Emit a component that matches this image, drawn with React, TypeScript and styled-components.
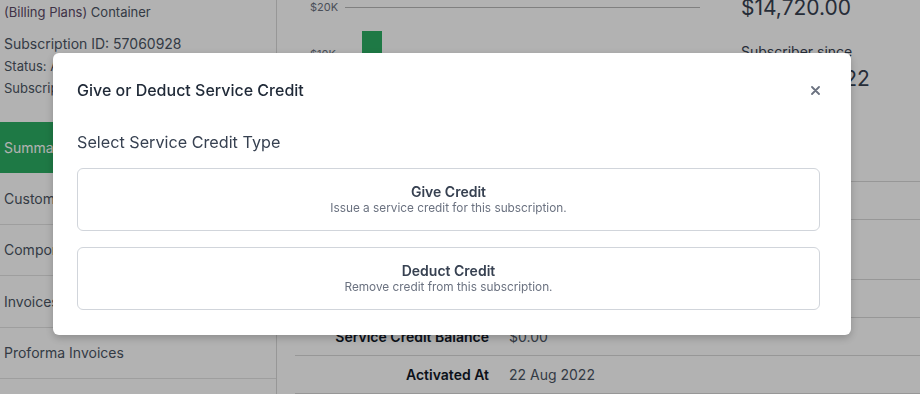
import React from "react";
import styled, { createGlobalStyle } from "styled-components";

const GlobalStyle = createGlobalStyle`
  html, body { margin: 0; padding: 0; background: #ffffff; overflow: hidden; }
  body { font-family: Inter, "Noto Sans", sans-serif; }
  * { box-sizing: border-box; }
`;

const Page = styled.div`
  display: flex;
  width: 920px;
  height: 394px;
  overflow: hidden;
  background: #ffffff;
  color: #374151;
`;

const Sidebar = styled.aside`
  width: 277px;
  flex-shrink: 0;
  border-right: 1px solid #d9d9d9;
  display: flex;
  flex-direction: column;
`;

const SideHeader = styled.div`
  display: flex;
  flex-direction: column;
  padding: 2px 4px 23px;
`;

const ContainerName = styled.div`
  font-size: 13px;
  line-height: 20px;
  color: #4b5563;
  margin-bottom: 11px;
  span { color: #5b4a66; }
`;

const SubId = styled.div`
  font-size: 14px;
  line-height: 22px;
  color: #4b5563;
`;

const Meta = styled.div`
  font-size: 13px;
  line-height: 22px;
  color: #4b5563;
`;

const NavItem = styled.div<{ $active?: boolean }>`
  height: 51.4px;
  flex-shrink: 0;
  display: flex;
  align-items: center;
  padding-left: 4px;
  font-size: 14px;
  color: ${(p) => (p.$active ? "#ffffff" : "#4b5563")};
  background: ${(p) => (p.$active ? "#2cae63" : "transparent")};
  border-bottom: 1px solid ${(p) => (p.$active ? "#2cae63" : "#e2e2e2")};
`;

const Main = styled.main`
  flex: 1;
  display: flex;
  flex-direction: column;
  padding-left: 18px;
  min-width: 0;
`;

const TopRow = styled.div`
  display: flex;
  height: 181px;
`;

const ChartSvg = styled.svg`
  width: 426px;
  height: 181px;
  flex-shrink: 0;
  display: block;
`;

const Stats = styled.div`
  display: flex;
  flex-direction: column;
  margin-left: 20px;
  margin-top: -5px;
`;

const BigValue = styled.div`
  font-size: 21px;
  line-height: 26px;
  color: #374151;
  white-space: nowrap;
`;

const StatLabel = styled.div`
  font-size: 14px;
  line-height: 20px;
  color: #374151;
  margin-top: 21px;
  margin-bottom: 4px;
`;

const Table = styled.div`
  border-top: 1px solid #d9d9d9;
  display: flex;
  flex-direction: column;
`;

const Row = styled.div`
  display: grid;
  grid-template-columns: 194px 1fr;
  column-gap: 20px;
  padding: 9px 0 8px;
  border-bottom: 1px solid #d9d9d9;
`;

const Label = styled.div`
  text-align: right;
  font-size: 14px;
  line-height: 20px;
  font-weight: 600;
  color: #111827;
`;

const Value = styled.div`
  font-size: 14px;
  line-height: 20px;
  color: #4b5563;
`;

const SubValue = styled.div`
  font-size: 12px;
  line-height: 22px;
  color: #6b7280;
`;

const Overlay = styled.div`
  position: fixed;
  inset: 0;
  background: rgba(0, 0, 0, 0.3);
  display: flex;
  align-items: flex-start;
  padding: 53px 0 0 53px;
`;

const Modal = styled.div`
  width: 798px;
  background: #ffffff;
  border-radius: 6px;
  box-shadow: 0 3px 8px rgba(0, 0, 0, 0.22);
  display: flex;
  flex-direction: column;
  padding: 27px 31px 25px 24px;
`;

const ModalHeader = styled.div`
  display: flex;
  align-items: center;
  justify-content: space-between;
  height: 20px;
`;

const ModalTitle = styled.h2`
  margin: 0;
  font-size: 16px;
  line-height: 20px;
  font-weight: 500;
  color: #1f2937;
`;

const CloseButton = styled.button`
  border: 0;
  background: transparent;
  padding: 0;
  width: 9px;
  height: 9px;
  display: flex;
  color: #6b7280;
  cursor: pointer;
`;

const SectionTitle = styled.div`
  margin: 30px 0 14px;
  font-size: 16.2px;
  line-height: 24px;
  color: #374151;
`;

const Options = styled.div`
  display: flex;
  flex-direction: column;
  gap: 16px;
`;

const OptionButton = styled.button`
  display: flex;
  flex-direction: column;
  align-items: center;
  width: 100%;
  padding: 14px 16px 15px;
  border: 1px solid #d1d5db;
  border-radius: 6px;
  background: #ffffff;
  font-family: inherit;
  cursor: pointer;
`;

const OptionTitle = styled.span`
  font-size: 14px;
  line-height: 18px;
  font-weight: 600;
  color: #374151;
`;

const OptionDesc = styled.span`
  font-size: 11.8px;
  line-height: 14px;
  color: #6b7280;
`;

const rows = [
  { label: "Next Billing Date", value: "22 Sep 2022" },
  { label: "Payment Method", value: "Visa ending 4242", sub: "Expires 12/2025" },
  { label: "Total Revenue", value: "$14,720.00" },
  { label: "Service Credit Balance", value: "$0.00" },
  { label: "Activated At", value: "22 Aug 2022" },
];

const nav = ["Summary", "Customer", "Components", "Invoices", "Proforma Invoices"];

export default function App() {
  return (
    <>
      <GlobalStyle />
      <Page>
        <Sidebar>
          <SideHeader>
            <ContainerName>
              <span>(Billing Plans)</span> Container
            </ContainerName>
            <SubId>Subscription ID: 57060928</SubId>
            <Meta>Status: Active</Meta>
            <Meta>Subscription Type: Recurring</Meta>
          </SideHeader>
          {nav.map((n, i) => (
            <NavItem key={n} $active={i === 0}>
              {n}
            </NavItem>
          ))}
        </Sidebar>
        <Main>
          <TopRow>
            <ChartSvg viewBox="0 0 426 181">
              <text x="15" y="11" fontSize="11" fill="#6b7280" fontFamily="Inter, sans-serif">$20K</text>
              <line x1="50" y1="7.5" x2="405" y2="7.5" stroke="#b8b8b8" strokeWidth="1" />
              <text x="15" y="58" fontSize="11" fill="#6b7280" fontFamily="Inter, sans-serif">$10K</text>
              <line x1="50" y1="54.5" x2="405" y2="54.5" stroke="#b8b8b8" strokeWidth="1" />
              <rect x="67" y="31" width="20" height="150" fill="#2cae63" />
            </ChartSvg>
            <Stats>
              <BigValue>$14,720.00</BigValue>
              <StatLabel>Subscriber since</StatLabel>
              <BigValue>22 Aug 2022</BigValue>
            </Stats>
          </TopRow>
          <Table>
            {rows.map((r) => (
              <Row key={r.label}>
                <Label>{r.label}</Label>
                <div>
                  <Value>{r.value}</Value>
                  {r.sub && <SubValue>{r.sub}</SubValue>}
                </div>
              </Row>
            ))}
          </Table>
        </Main>
      </Page>
      <Overlay>
        <Modal role="dialog">
          <ModalHeader>
            <ModalTitle>Give or Deduct Service Credit</ModalTitle>
            <CloseButton aria-label="Close">
              <svg width="9" height="9" viewBox="0 0 9 9">
                <path d="M1 1L8 8M8 1L1 8" stroke="currentColor" strokeWidth="1.8" strokeLinecap="round" />
              </svg>
            </CloseButton>
          </ModalHeader>
          <SectionTitle>Select Service Credit Type</SectionTitle>
          <Options>
            <OptionButton>
              <OptionTitle>Give Credit</OptionTitle>
              <OptionDesc>Issue a service credit for this subscription.</OptionDesc>
            </OptionButton>
            <OptionButton>
              <OptionTitle>Deduct Credit</OptionTitle>
              <OptionDesc>Remove credit from this subscription.</OptionDesc>
            </OptionButton>
          </Options>
        </Modal>
      </Overlay>
    </>
  );
}
